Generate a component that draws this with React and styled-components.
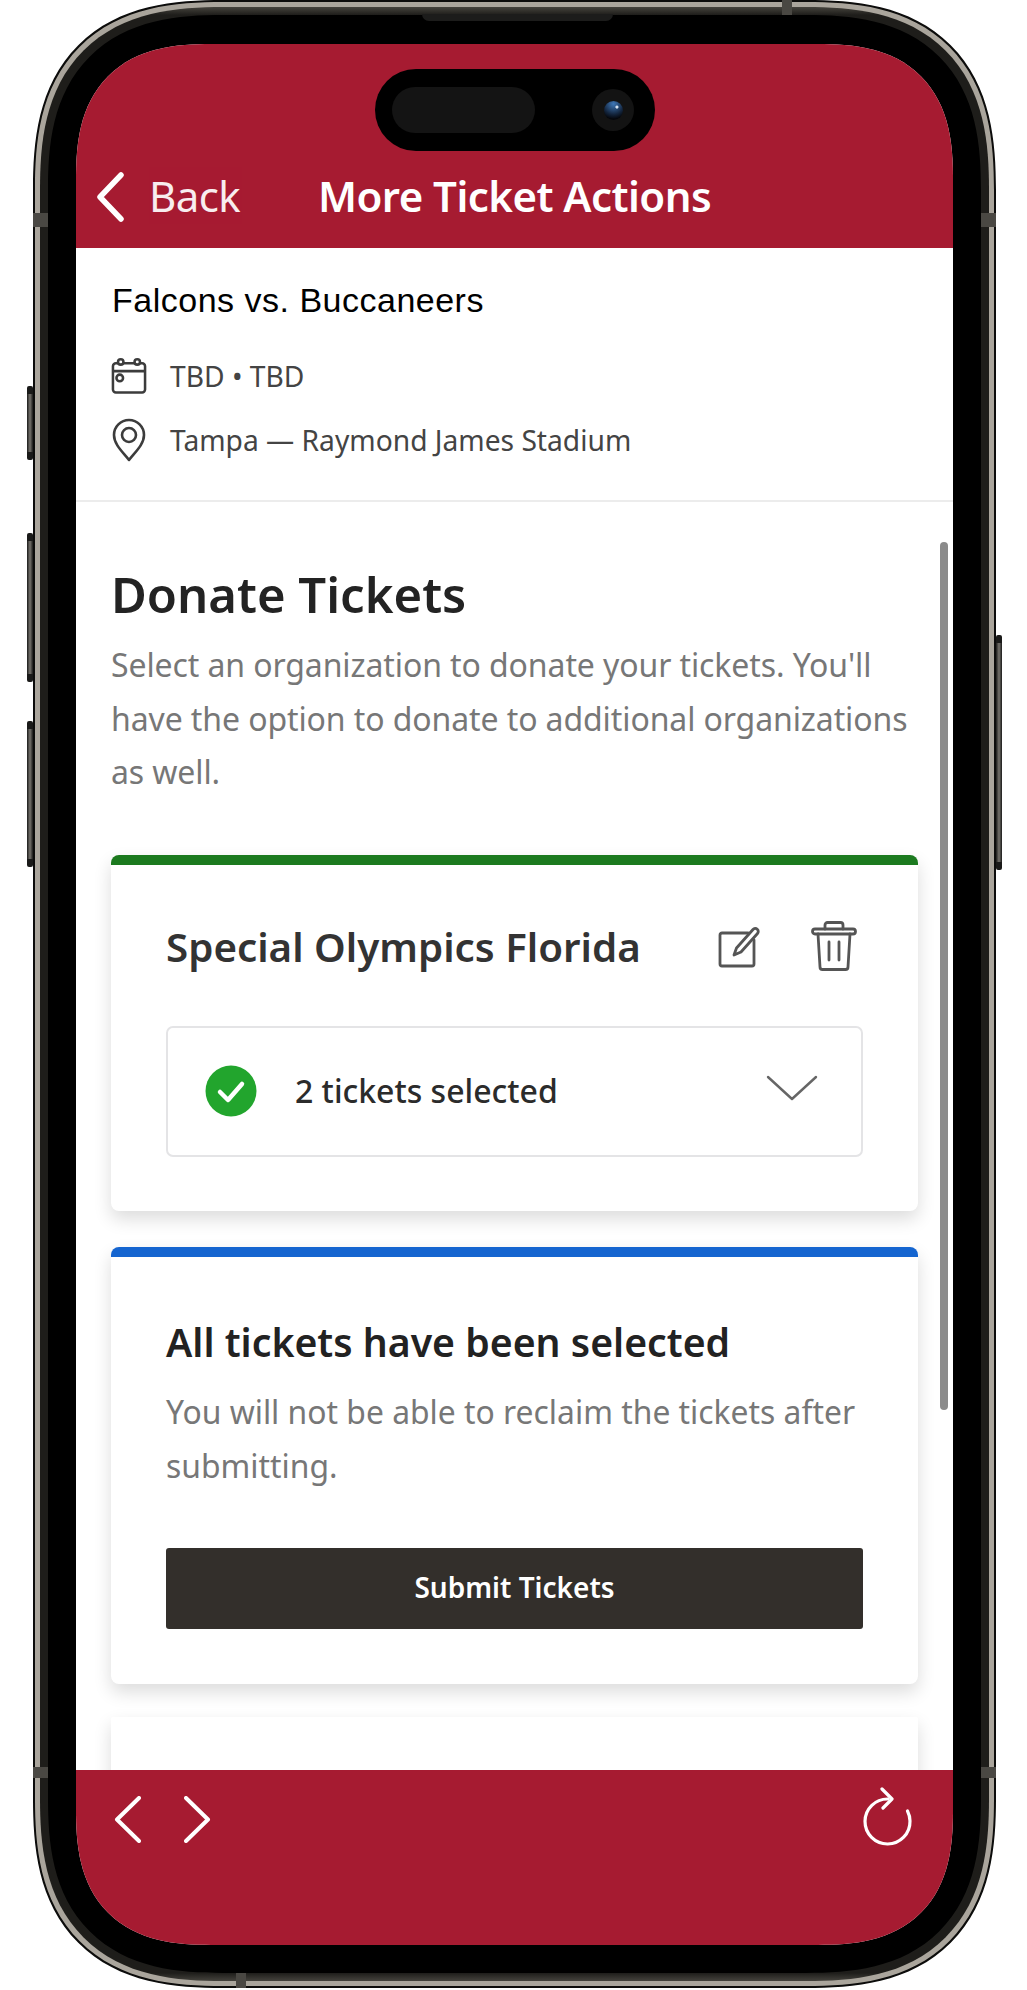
import React from 'react';
import styled, { createGlobalStyle } from 'styled-components';

const sans = '"Noto Sans", "Open Sans", sans-serif';
const crimson = '#a61b31';

const GlobalStyle = createGlobalStyle`
  html, body { margin: 0; padding: 0; background: #fff; }
  * { box-sizing: border-box; }
`;

const Stage = styled.div`
  width: 1027px;
  height: 1990px;
  padding: 0 31px 2px 33px;
  font-family: ${sans};
  font-stretch: semi-condensed;
  overflow: hidden;
`;

const Phone = styled.div`
  position: relative;
  height: 100%;
`;

const Rim = styled.div`
  height: 100%;
  padding: 2px;
  background: #0c0c0b;
  border-radius: 190px;
  corner-shape: superellipse(1.35);
`;

const Band = styled.div`
  height: 100%;
  padding: 5px;
  background: #aaa59c;
  border-radius: 188px;
  corner-shape: superellipse(1.35);
`;

const InnerBand = styled.div`
  height: 100%;
  padding: 8px;
  background: linear-gradient(#45433d, #1e1d1a 8px, #1e1d1a calc(100% - 8px), #45433d);
  border-radius: 183px;
  corner-shape: superellipse(1.35);
`;

const Glass = styled.div`
  height: 100%;
  padding: 29px 28px 28px;
  background: #000;
  border-radius: 175px;
  corner-shape: superellipse(1.35);
`;

const Screen = styled.div`
  position: relative;
  display: flex;
  flex-direction: column;
  height: 100%;
  background: #fff;
  border-radius: 135px;
  corner-shape: superellipse(1.35);
  overflow: hidden;
`;

const SideButton = styled.div`
  position: absolute;
  top: ${p => p.$top}px;
  height: ${p => p.$height}px;
  ${p => (p.$right ? 'right: -6px;' : 'left: -6px;')}
  width: 6px;
  background: linear-gradient(90deg, #1a1a19, #77746e 50%, #1a1a19);
  border-radius: 2px;
  border-top: 8px solid #1a1a19;
  border-bottom: 8px solid #1a1a19;
`;

const Antenna = styled.div`
  position: absolute;
  background: #4a4843;
  ${p => p.$css}
`;

const Speaker = styled.div`
  position: absolute;
  top: 14px;
  left: 389px;
  width: 191px;
  height: 7px;
  background: #1c1c1b;
  border-radius: 0 0 8px 8px;
`;

const Island = styled.div`
  position: absolute;
  top: 25px;
  left: 299px;
  width: 280px;
  height: 82px;
  display: flex;
  align-items: center;
  justify-content: space-between;
  padding: 0 21px 0 17px;
  background: #000;
  border-radius: 41px;
`;

const Sensor = styled.div`
  width: 143px;
  height: 46px;
  background: #141414;
  border-radius: 23px;
`;

const Camera = styled.div`
  display: flex;
  align-items: center;
  justify-content: center;
  width: 42px;
  height: 42px;
  background: #131313;
  border-radius: 50%;
`;

const Lens = styled.div`
  width: 19px;
  height: 19px;
  background:
    radial-gradient(circle at 68% 32%, #d8e4f2 0, #d8e4f2 1px, transparent 2px),
    radial-gradient(circle at 50% 15%, #3f78b8, #14263f 55%, #05070c 80%);
  border-radius: 50%;
`;

const Header = styled.header`
  flex: none;
  height: 204px;
  display: flex;
  align-items: flex-end;
  padding: 0 0 24px 20px;
  background: ${crimson};
  color: #fff;
  svg { margin-bottom: 2px; }
`;

const BackLabel = styled.span`
  margin-left: 25px;
  width: 169px;
  font-size: 42px;
  line-height: 56px;
  font-weight: 400;
  letter-spacing: -0.6px;
  opacity: 0.92;
`;

const HeaderTitle = styled.h1`
  margin: 0;
  font-size: 42px;
  line-height: 56px;
  font-weight: 600;
  letter-spacing: -0.55px;
`;

const EventInfo = styled.section`
  flex: none;
  height: 254px;
  padding: 30px 36px 0 35px;
  border-bottom: 2px solid #ececec;
`;

const EventName = styled.div`
  margin: 0 0 22px 1px;
  font-family: "Liberation Sans", Arial, sans-serif;
  font-stretch: normal;
  font-size: 34px;
  line-height: 44px;
  letter-spacing: 0.5px;
  color: #000;
`;

const EventRow = styled.div`
  display: flex;
  align-items: center;
  gap: 23px;
  height: 64px;
  font-size: 28.2px;
  color: #444;
`;

const IconSlot = styled.div`
  display: flex;
  justify-content: center;
  width: 36px;
`;

const ScrollArea = styled.main`
  position: relative;
  flex: 1;
  min-height: 0;
  overflow: hidden;
  padding: 55px 35px 0;
`;

const ScrollThumb = styled.div`
  position: absolute;
  top: 40px;
  right: 5px;
  width: 8px;
  height: 868px;
  background: #8b8b8b;
  border-radius: 4px;
`;

const Title = styled.h2`
  margin: 0 0 6px;
  font-size: 49px;
  line-height: 75px;
  font-weight: 600;
  color: #232323;
`;

const Lead = styled.p`
  margin: 0;
  width: 808px;
  font-size: 32px;
  line-height: 53.5px;
  color: #777;
  letter-spacing: -0.1px;
`;

const Card = styled.div`
  margin-top: ${p => p.$gap}px;
  padding: ${p => p.$pad};
  background: #fff;
  border-top: ${p => (p.$accent ? `10px solid ${p.$accent}` : '0')};
  border-radius: ${p => (p.$accent ? 8 : 2)}px;
  box-shadow: 0 8px 18px rgba(0, 0, 0, 0.14);
  ${p => p.$height && `height: ${p.$height}px;`}
`;

const CardHead = styled.div`
  display: flex;
  align-items: center;
  height: 84px;
  margin-bottom: 37px;
`;

const CardName = styled.h3`
  flex: 1;
  margin: 0;
  font-size: 40.3px;
  line-height: 56px;
  font-weight: 600;
  color: #333;
`;

const CardIcons = styled.div`
  display: flex;
  align-items: center;
  gap: 50px;
  margin-right: 6px;
`;

const TrashSlot = styled.div`
  display: flex;
  margin-top: -2px;
`;

const SelectBox = styled.div`
  display: flex;
  align-items: center;
  height: 131px;
  padding: 0 43px 0 37px;
  border: 2px solid #e4e4e6;
  border-radius: 7px;
`;

const SelectLabel = styled.span`
  flex: 1;
  margin: -2px 0 0 38px;
  font-size: 32px;
  font-weight: 500;
  color: #2b2b2b;
`;

const CaretSlot = styled.div`
  display: flex;
  margin-top: -7px;
`;

const NoticeTitle = styled.h3`
  margin: 0 0 15px;
  font-size: 39.2px;
  line-height: 56px;
  font-weight: 600;
  color: #222;
`;

const NoticeText = styled.p`
  margin: 0 0 55px;
  font-size: 31.85px;
  line-height: 54px;
  color: #777;
`;

const SubmitButton = styled.button`
  display: block;
  width: 100%;
  height: 81px;
  padding: 0 0 2px;
  border: 0;
  border-radius: 3px;
  background: #332f2b;
  color: #fff;
  font-family: inherit;
  font-stretch: inherit;
  font-size: 28px;
  font-weight: 600;
`;

const Footer = styled.footer`
  flex: none;
  height: 175px;
  display: flex;
  align-items: flex-start;
  padding: 17px 40px 0 38px;
  background: ${crimson};
`;

const NavIcons = styled.div`
  flex: 1;
  display: flex;
  gap: 43px;
  padding-top: 9px;
`;

const Chevron = ({ dir }) => (
  <svg width="27" height="47" viewBox="0 0 27 47" fill="none" stroke="#fff" strokeWidth="4" strokeLinecap="round" strokeLinejoin="round">
    <polyline points={dir === 'left' ? '25,2 3,23.5 25,45' : '2,2 24,23.5 2,45'} />
  </svg>
);

const BackChevron = () => (
  <svg width="28" height="50" viewBox="0 0 28 50" fill="none" stroke="#fff" strokeWidth="5.5" strokeLinecap="round" strokeLinejoin="round">
    <polyline points="25,3 4,25 25,47" />
  </svg>
);

const CalendarIcon = () => (
  <svg width="37" height="38" viewBox="0 0 37 38" fill="none" stroke="#3c3c3c" strokeWidth="2.6" strokeLinejoin="round">
    <rect x="2" y="6" width="33" height="30" rx="3" />
    <path d="M2 14h33" />
    <circle cx="10" cy="4.5" r="2.8" fill="#fff" />
    <circle cx="27" cy="4.5" r="2.8" fill="#fff" />
    <circle cx="9" cy="21" r="3.4" />
  </svg>
);

const PinIcon = () => (
  <svg width="34" height="44" viewBox="0 0 34 44" fill="none" stroke="#3c3c3c" strokeWidth="2.6" strokeLinejoin="round">
    <path d="M17 42 C12 35 2 27 2 17 A15 15 0 0 1 32 17 C32 27 22 35 17 42 Z" />
    <circle cx="17" cy="17" r="7" />
  </svg>
);

const EditIcon = () => (
  <svg width="43" height="42" viewBox="0 0 43 42" fill="none" stroke="#555" strokeWidth="2.8" strokeLinejoin="round" strokeLinecap="round">
    <path d="M30 7H4a2 2 0 0 0-2 2v29a2 2 0 0 0 2 2h30a2 2 0 0 0 2-2V14" />
    <path d="M16 29l2.5-7L35 3.5a3 3 0 0 1 4.5 4L23 26z" />
  </svg>
);

const TrashIcon = () => (
  <svg width="46" height="50" viewBox="0 0 46 50" fill="none" stroke="#555" strokeWidth="2.8" strokeLinejoin="round" strokeLinecap="round">
    <path d="M14 8V4a2.5 2.5 0 0 1 2.5-2.5h13A2.5 2.5 0 0 1 32 4v4" />
    <rect x="1.5" y="8" width="43" height="5" rx="2.5" />
    <path d="M7 13l2 33a2.5 2.5 0 0 0 2.5 2.5h23A2.5 2.5 0 0 0 37 46l2-33" />
    <path d="M18 21v18M28 21v18" />
  </svg>
);

const CheckBadge = () => (
  <svg width="52" height="52" viewBox="0 0 52 52">
    <circle cx="26" cy="26" r="25.5" fill="#22a52d" />
    <polyline points="15,27 23,35 37,19" fill="none" stroke="#fff" strokeWidth="4.5" strokeLinecap="round" strokeLinejoin="round" />
  </svg>
);

const ChevronDown = () => (
  <svg width="52" height="26" viewBox="0 0 52 26" fill="none" stroke="#666" strokeWidth="2.4" strokeLinecap="round" strokeLinejoin="round">
    <polyline points="2,2 26,24 50,2" />
  </svg>
);

const RefreshIcon = () => (
  <svg width="50" height="59" viewBox="0 0 50 59" fill="none" stroke="#fff" strokeWidth="3.2" strokeLinecap="round" strokeLinejoin="round">
    <path d="M25 12 A22.5 22.5 0 1 0 47 34 C47 30 46 27 44.5 24" />
    <polyline points="19,2 29,12 20,21" />
  </svg>
);

export default function App() {
  return (
    <>
      <GlobalStyle />
      <Stage>
        <Phone>
          <SideButton $top={386} $height={74} />
          <SideButton $top={533} $height={149} />
          <SideButton $top={721} $height={146} />
          <SideButton $right $top={635} $height={235} />
          <Rim>
            <Band>
              <InnerBand>
                <Glass>
                  <Screen>
                    <Header>
                      <BackChevron />
                      <BackLabel>Back</BackLabel>
                      <HeaderTitle>More Ticket Actions</HeaderTitle>
                    </Header>
                    <EventInfo>
                      <EventName>Falcons vs. Buccaneers</EventName>
                      <EventRow>
                        <IconSlot><CalendarIcon /></IconSlot>
                        TBD • TBD
                      </EventRow>
                      <EventRow>
                        <IconSlot><PinIcon /></IconSlot>
                        Tampa — Raymond James Stadium
                      </EventRow>
                    </EventInfo>
                    <ScrollArea>
                      <ScrollThumb />
                      <Title>Donate Tickets</Title>
                      <Lead>Select an organization to donate your tickets. You'll have the option to donate to additional organizations as well.</Lead>
                      <Card $gap={56} $accent="#1c7a1f" $pad="40px 55px 54px">
                        <CardHead>
                          <CardName>Special Olympics Florida</CardName>
                          <CardIcons>
                            <EditIcon />
                            <TrashSlot><TrashIcon /></TrashSlot>
                          </CardIcons>
                        </CardHead>
                        <SelectBox>
                          <CheckBadge />
                          <SelectLabel>2 tickets selected</SelectLabel>
                          <CaretSlot><ChevronDown /></CaretSlot>
                        </SelectBox>
                      </Card>
                      <Card $gap={36} $accent="#1565d0" $pad="57px 55px 55px">
                        <NoticeTitle>All tickets have been selected</NoticeTitle>
                        <NoticeText>You will not be able to reclaim the tickets after submitting.</NoticeText>
                        <SubmitButton>Submit Tickets</SubmitButton>
                      </Card>
                      <Card $gap={33} $pad="0" $height={200} />
                    </ScrollArea>
                    <Footer>
                      <NavIcons>
                        <Chevron dir="left" />
                        <Chevron dir="right" />
                      </NavIcons>
                      <RefreshIcon />
                    </Footer>
                    <Island>
                      <Sensor />
                      <Camera><Lens /></Camera>
                    </Island>
                  </Screen>
                </Glass>
              </InnerBand>
            </Band>
          </Rim>
          <Speaker />
          <Antenna $css="top: 213px; left: 0; width: 15px; height: 14px;" />
          <Antenna $css="top: 213px; right: 0; width: 15px; height: 14px;" />
          <Antenna $css="top: 1767px; left: 0; width: 15px; height: 11px;" />
          <Antenna $css="top: 1767px; right: 0; width: 15px; height: 11px;" />
          <Antenna $css="top: 0; left: 749px; width: 10px; height: 15px;" />
          <Antenna $css="bottom: 0; left: 203px; width: 10px; height: 15px;" />
        </Phone>
      </Stage>
    </>
  );
}
